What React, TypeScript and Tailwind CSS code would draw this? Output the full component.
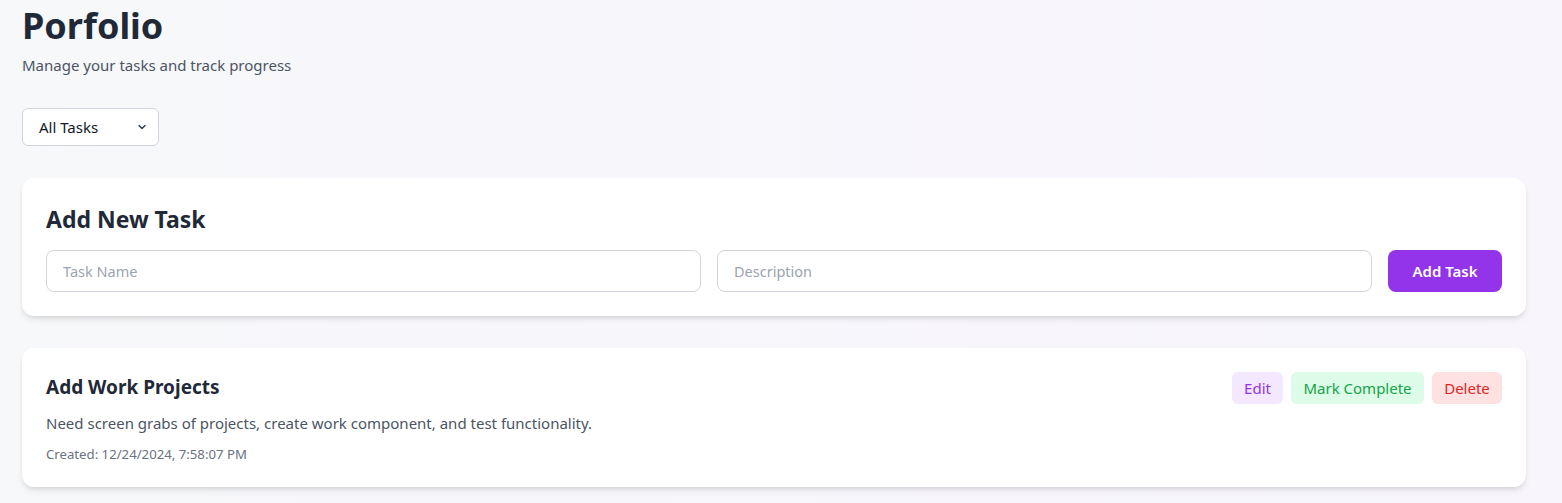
import React from "react";

export default function App() {
  return (
    <div
      className="min-h-screen w-full bg-linear-to-r from-[#f7f8fa] to-[#f8f5fd] pl-[22px] pr-[36px] pb-6"
      style={{ fontFamily: '"Noto Sans", "Open Sans", sans-serif' }}
    >
      <h1 className="pt-[2px] text-[36px] leading-[48px] font-bold text-[#1f2937]">Porfolio</h1>
      <p className="mt-[4px] text-[15px] leading-[22px] text-[#4b5563]">Manage your tasks and track progress</p>

      <div className="mt-[32px] flex h-[38px] w-[137px] items-center justify-between rounded-md border border-[#d1d5db] bg-white pl-4 pr-[10px] text-[15px] text-[#111827]">
        <span>All Tasks</span>
        <svg width="12" height="12" viewBox="0 0 24 24" fill="none" stroke="#374151" strokeWidth="3" strokeLinecap="round" strokeLinejoin="round">
          <path d="M6 9l6 6 6-6" />
        </svg>
      </div>

      <div className="mt-[32px] rounded-xl bg-white p-6 shadow-md">
        <h2 className="text-[23px] leading-[32px] font-bold text-[#1f2937] pt-[1px] pb-[1px]">Add New Task</h2>
        <div className="mt-[14px] flex gap-4">
          <input
            placeholder="Task Name"
            className="h-[42px] flex-1 rounded-lg border border-[#d1d5db] px-4 text-[14.5px] placeholder:text-[#9ca3af] outline-none"
          />
          <input
            placeholder="Description"
            className="h-[42px] flex-1 rounded-lg border border-[#d1d5db] px-4 text-[14.5px] placeholder:text-[#9ca3af] outline-none"
          />
          <button className="h-[42px] w-[114px] rounded-lg bg-[#9333ea] text-[15px] font-semibold text-white">Add Task</button>
        </div>
      </div>

      <div className="mt-[32px] rounded-xl bg-white p-6 shadow-md">
        <div className="flex items-start justify-between">
          <div>
            <h3 className="text-[19px] leading-[28px] font-bold text-[#1f2937] mt-[1px]">Add Work Projects</h3>
            <p className="mt-[11px] text-[15px] leading-[22px] text-[#4b5563]">Need screen grabs of projects, create work component, and test functionality.</p>
            <p className="mt-[11px] text-[13.2px] leading-[18px] text-[#6b7280]">Created: 12/24/2024, 7:58:07 PM</p>
          </div>
          <div className="flex gap-2">
            <button className="h-[32px] w-[51px] rounded-md bg-[#f3e8ff] text-[15px] text-[#9333ea]">Edit</button>
            <button className="h-[32px] w-[133px] rounded-md bg-[#dcfce7] text-[15px] text-[#16a34a]">Mark Complete</button>
            <button className="h-[32px] w-[70px] rounded-md bg-[#fee2e2] text-[15px] text-[#dc2626]">Delete</button>
          </div>
        </div>
      </div>
    </div>
  );
}
